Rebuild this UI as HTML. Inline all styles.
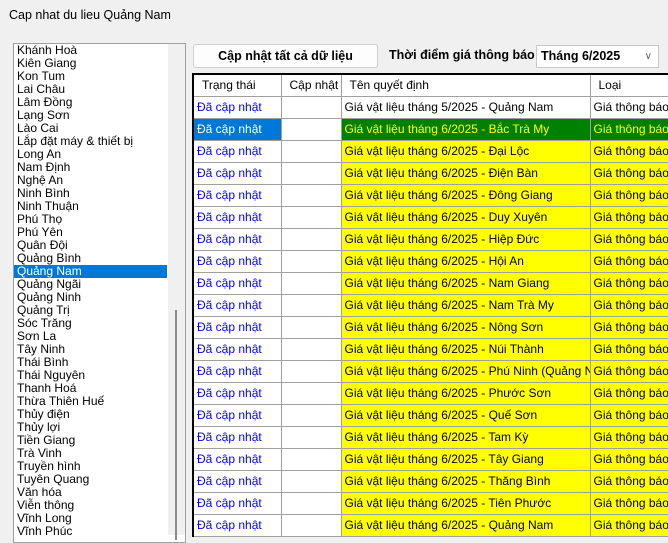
<!DOCTYPE html>
<html><head><meta charset="utf-8"><style>
*{margin:0;padding:0;box-sizing:border-box}
body{width:668px;height:535px;overflow:hidden;background:#f0f0f0;font-family:"Liberation Sans","DejaVu Sans",sans-serif;font-size:12px;color:#000;position:relative}
.abs{position:absolute}
#title{left:9px;top:8px;font-size:12.5px}
#list{left:13px;top:43px;width:173px;height:500px;background:#fff;border:1px solid #a0a0a0;overflow:hidden}
#list div{height:13px;line-height:13px;padding-left:3px;white-space:nowrap}
#list .sel{background:#0078d7;color:#fff;width:153px}
#sb{left:168px;top:44px;width:17px;height:491px;background:#f0f0f0}
#thumb{left:175px;top:310px;width:2px;height:230px;background:#8a8a8a}
#btn{left:193px;top:44px;width:185px;height:24px;border:1px solid #d0d0d0;border-radius:3px;background:#fdfdfd;text-align:center;line-height:22px;font-weight:bold;font-size:12.5px}
#lbl{left:389px;top:48px;font-weight:bold;font-size:12.5px}
#combo{left:536px;top:45px;width:123px;height:23px;background:#fff;border:1px solid #c8c8c8;font-weight:bold;font-size:12.5px;line-height:21px;padding-left:4px}
#combo span{position:absolute;right:6px;top:0;font-weight:normal;color:#666;font-size:10px}
#grid{left:192px;top:73px;border-top:2px solid #000;border-left:2px solid #000;background:#f0f0f0}
table{border-collapse:collapse;table-layout:fixed;width:520px}
td{border-right:1px solid #a0a0a0;border-bottom:1px solid #a0a0a0;height:22px;padding-left:3px;white-space:nowrap;overflow:hidden;font-size:12px}
tr.h td{background:#fff;padding-left:8px;height:21px}
td.s{color:#0000ff;background:#fff}
td.y{background:#ffff00}
tr.g td.y{background:#008000;color:#ffff00}
td.b{background:#0078d7!important;color:#fff!important}
td.w{background:#fff}
</style></head><body>
<div class="abs" id="title">Cap nhat du lieu Quảng Nam</div>
<div class="abs" id="list">
<div>Khánh Hoà</div><div>Kiên Giang</div><div>Kon Tum</div><div>Lai Châu</div><div>Lâm Đồng</div><div>Lạng Sơn</div><div>Lào Cai</div><div>Lắp đặt máy &amp; thiết bị</div><div>Long An</div><div>Nam Định</div><div>Nghệ An</div><div>Ninh Bình</div><div>Ninh Thuận</div><div>Phú Thọ</div><div>Phú Yên</div><div>Quân Đội</div><div>Quảng Bình</div><div class="sel">Quảng Nam</div><div>Quảng Ngãi</div><div>Quảng Ninh</div><div>Quảng Trị</div><div>Sóc Trăng</div><div>Sơn La</div><div>Tây Ninh</div><div>Thái Bình</div><div>Thái Nguyên</div><div>Thanh Hoá</div><div>Thừa Thiên Huế</div><div>Thủy điện</div><div>Thủy lợi</div><div>Tiền Giang</div><div>Trà Vinh</div><div>Truyền hình</div><div>Tuyên Quang</div><div>Văn hóa</div><div>Viễn thông</div><div>Vĩnh Long</div><div>Vĩnh Phúc</div>
</div>
<div class="abs" id="sb"></div>
<div class="abs" id="thumb"></div>
<div class="abs" id="btn">Cập nhật tất cả dữ liệu</div>
<div class="abs" id="lbl">Thời điểm giá thông báo</div>
<div class="abs" id="combo">Tháng 6/2025<span>&#8744;</span></div>
<div class="abs" id="grid">
<table>
<colgroup><col style="width:87px"><col style="width:60px"><col style="width:249px"><col style="width:124px"></colgroup>
<tr class="h"><td>Trạng thái</td><td>Cập nhật</td><td>Tên quyết định</td><td>Loại</td></tr>
<tr><td class="s">Đã cập nhật</td><td class="w"></td><td class="w">Giá vật liệu tháng 5/2025 - Quảng Nam</td><td class="w">Giá thông báo</td></tr>
<tr class="g"><td class="s b">Đã cập nhật</td><td class="w"></td><td class="y">Giá vật liệu tháng 6/2025 - Bắc Trà My</td><td class="y">Giá thông báo</td></tr>
<tr><td class="s">Đã cập nhật</td><td class="w"></td><td class="y">Giá vật liệu tháng 6/2025 - Đại Lộc</td><td class="y">Giá thông báo</td></tr>
<tr><td class="s">Đã cập nhật</td><td class="w"></td><td class="y">Giá vật liệu tháng 6/2025 - Điện Bàn</td><td class="y">Giá thông báo</td></tr>
<tr><td class="s">Đã cập nhật</td><td class="w"></td><td class="y">Giá vật liệu tháng 6/2025 - Đông Giang</td><td class="y">Giá thông báo</td></tr>
<tr><td class="s">Đã cập nhật</td><td class="w"></td><td class="y">Giá vật liệu tháng 6/2025 - Duy Xuyên</td><td class="y">Giá thông báo</td></tr>
<tr><td class="s">Đã cập nhật</td><td class="w"></td><td class="y">Giá vật liệu tháng 6/2025 - Hiệp Đức</td><td class="y">Giá thông báo</td></tr>
<tr><td class="s">Đã cập nhật</td><td class="w"></td><td class="y">Giá vật liệu tháng 6/2025 - Hội An</td><td class="y">Giá thông báo</td></tr>
<tr><td class="s">Đã cập nhật</td><td class="w"></td><td class="y">Giá vật liệu tháng 6/2025 - Nam Giang</td><td class="y">Giá thông báo</td></tr>
<tr><td class="s">Đã cập nhật</td><td class="w"></td><td class="y">Giá vật liệu tháng 6/2025 - Nam Trà My</td><td class="y">Giá thông báo</td></tr>
<tr><td class="s">Đã cập nhật</td><td class="w"></td><td class="y">Giá vật liệu tháng 6/2025 - Nông Sơn</td><td class="y">Giá thông báo</td></tr>
<tr><td class="s">Đã cập nhật</td><td class="w"></td><td class="y">Giá vật liệu tháng 6/2025 - Núi Thành</td><td class="y">Giá thông báo</td></tr>
<tr><td class="s">Đã cập nhật</td><td class="w"></td><td class="y">Giá vật liệu tháng 6/2025 - Phú Ninh (Quảng Nam)</td><td class="y">Giá thông báo</td></tr>
<tr><td class="s">Đã cập nhật</td><td class="w"></td><td class="y">Giá vật liệu tháng 6/2025 - Phước Sơn</td><td class="y">Giá thông báo</td></tr>
<tr><td class="s">Đã cập nhật</td><td class="w"></td><td class="y">Giá vật liệu tháng 6/2025 - Quế Sơn</td><td class="y">Giá thông báo</td></tr>
<tr><td class="s">Đã cập nhật</td><td class="w"></td><td class="y">Giá vật liệu tháng 6/2025 - Tam Kỳ</td><td class="y">Giá thông báo</td></tr>
<tr><td class="s">Đã cập nhật</td><td class="w"></td><td class="y">Giá vật liệu tháng 6/2025 - Tây Giang</td><td class="y">Giá thông báo</td></tr>
<tr><td class="s">Đã cập nhật</td><td class="w"></td><td class="y">Giá vật liệu tháng 6/2025 - Thăng Bình</td><td class="y">Giá thông báo</td></tr>
<tr><td class="s">Đã cập nhật</td><td class="w"></td><td class="y">Giá vật liệu tháng 6/2025 - Tiên Phước</td><td class="y">Giá thông báo</td></tr>
<tr><td class="s">Đã cập nhật</td><td class="w"></td><td class="y">Giá vật liệu tháng 6/2025 - Quảng Nam</td><td class="y">Giá thông báo</td></tr>
</table>
</div>
</body></html>
